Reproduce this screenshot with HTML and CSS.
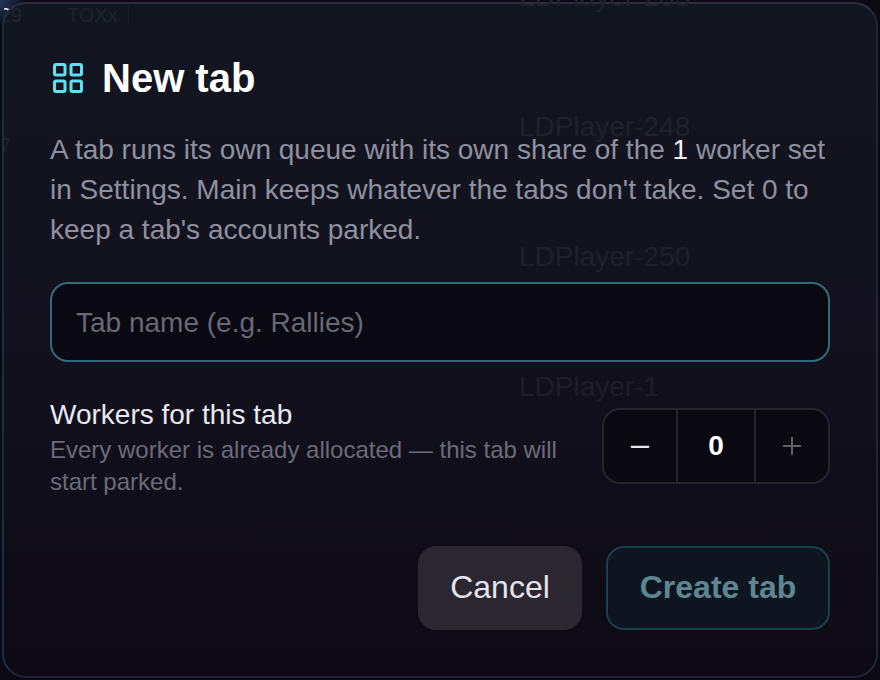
FILE: index.html
```html
<!DOCTYPE html>
<html lang="en">
<head>
<meta charset="utf-8">
<title>New tab</title>
<link rel="stylesheet" href="styles.css">
</head>
<body>
<div class="backdrop">
  <span class="ghost g2">LDPlayer-248</span>
  <span class="ghost g3">LDPlayer-250</span>
  <span class="ghost g4">LDPlayer-1</span>
  <span class="ghost small g5">29</span>
  <span class="ghost small g6">TOXx</span>
  <span class="ghost-rule"></span>
  <span class="ghost small g7">7</span>
</div>
<main class="modal">
  <header class="head">
    <svg class="head-icon" viewBox="0 0 24 24" fill="none" stroke="currentColor" stroke-width="2" stroke-linecap="round" stroke-linejoin="round" aria-hidden="true">
      <rect x="3" y="3" width="7" height="7" rx="1"/>
      <rect x="14" y="3" width="7" height="7" rx="1"/>
      <rect x="14" y="14" width="7" height="7" rx="1"/>
      <rect x="3" y="14" width="7" height="7" rx="1"/>
    </svg>
    <h1 class="title">New tab</h1>
  </header>
  <p class="intro">A tab runs its own queue with its own share of the <b class="strong">1</b> worker set in Settings. Main keeps whatever the tabs don't take. Set 0 to keep a tab's accounts parked.</p>
  <input class="name" type="text" placeholder="Tab name (e.g. Rallies)">
  <section class="workers">
    <div class="workers-text">
      <div class="workers-label">Workers for this tab</div>
      <div class="workers-hint">Every worker is already allocated — this tab will start parked.</div>
    </div>
    <div class="stepper">
      <button class="step step-on" type="button" aria-label="Decrease">
        <svg viewBox="0 0 24 24" class="step-icon" fill="none" stroke="currentColor" stroke-width="2.6" stroke-linecap="round"><path d="M2 13h20"/></svg>
      </button>
      <div class="count">0</div>
      <button class="step step-off" type="button" aria-label="Increase">
        <svg viewBox="0 0 24 24" class="step-icon" fill="none" stroke="currentColor" stroke-width="2.4" stroke-linecap="round"><path d="M2 12h20M12 2v20"/></svg>
      </button>
    </div>
  </section>
  <footer class="actions">
    <button class="btn cancel" type="button">Cancel</button>
    <button class="btn create" type="button">Create tab</button>
  </footer>
</main>
<span class="top-ghost">LDPlayer-283</span>
</body>
</html>
```

FILE: styles.css
```css
* { box-sizing: border-box; }
html, body { margin: 0; height: 100%; }
body {
  width: 880px;
  height: 680px;
  overflow: hidden;
  position: relative;
  background: radial-gradient(circle at 0 0, #24395c, rgba(36, 57, 92, 0) 26px), #0b0a12;
  padding: 2px;
  font-family: "Liberation Sans", Arial, sans-serif;
}
.backdrop { position: absolute; inset: 4px; overflow: hidden; pointer-events: none; }
.ghost { position: absolute; font-size: 28px; line-height: 32px; color: #b4b8c6; white-space: nowrap; }
.small { font-size: 20px; line-height: 24px; }
.top-ghost { position: absolute; left: 519px; top: -19px; font-size: 28px; line-height: 32px; color: #20232e; white-space: nowrap; pointer-events: none; }
.g2 { left: 515px; top: 107px; }
.g3 { left: 515px; top: 237px; }
.g4 { left: 515px; top: 367px; }
.g5 { left: -4px; top: -1px; color: #d8dcea; }
.g6 { left: 63px; top: -1px; }
.g7 { left: -4px; top: 129px; }
.ghost-rule { position: absolute; left: 124px; top: 1px; width: 1px; height: 20px; background: #b4b8c6; opacity: .6; }
.modal {
  position: relative;
  width: 876px;
  height: 676px;
  padding: 54px 46px 46px;
  border: 2px solid #232436;
  border-top-color: #2a2e40;
  border-left-color: #1e2c3e;
  border-radius: 24px;
  background: linear-gradient(180deg, rgba(18, 22, 33, .93) 0%, rgba(20, 18, 32, .93) 45%, rgba(13, 10, 21, .93) 100%);
}
.head { display: flex; align-items: center; gap: 16px; height: 40px; }
.head-icon { width: 36px; height: 36px; color: #5ee0f2; flex: none; }
.title { margin: 0; font-size: 40px; line-height: 40px; font-weight: 700; color: #fff; }
.intro { margin: 32px 0 0; font-size: 28px; line-height: 40px; color: #8f909f; }
.strong { font-weight: 400; color: #f2f2f7; }
.name {
  display: block;
  width: 780px;
  height: 80px;
  margin-top: 32px;
  padding: 2px 24px 0;
  border: 2px solid #2e6c78;
  border-radius: 18px;
  background: #0a0812;
  font: 28px "Liberation Sans", Arial, sans-serif;
  color: #fff;
  outline: none;
}
.name::placeholder { color: #686874; opacity: 1; }
.workers { display: flex; align-items: flex-start; justify-content: space-between; gap: 40px; margin-top: 37px; }
.workers-text { width: 520px; }
.workers-label { font-size: 28px; line-height: 32px; color: #e8e8f0; }
.workers-hint { margin-top: 3px; font-size: 24px; line-height: 32px; color: #6b6a78; }
.stepper {
  display: flex;
  width: 228px;
  height: 76px;
  margin-top: 9px;
  border: 2px solid #26242e;
  border-radius: 18px;
  background: #0a0811;
  overflow: hidden;
  flex: none;
}
.step { flex: none; width: 72px; padding: 0; border: 0; background: none; display: flex; align-items: center; justify-content: center; }
.step-icon { width: 20px; height: 20px; }
.step-on { color: #e6e6ec; }
.step-off { color: #5f5e69; }
.count {
  flex: 1;
  display: flex;
  align-items: center;
  justify-content: center;
  border-left: 2px solid #26242e;
  border-right: 2px solid #26242e;
  font-size: 28px;
  font-weight: 700;
  color: #fff;
}
.actions { display: flex; justify-content: flex-end; gap: 24px; margin-top: 48px; }
.btn { height: 84px; border-radius: 18px; font: 32px "Liberation Sans", Arial, sans-serif; padding: 0 0 2px; }
.cancel { width: 164px; border: 0; background: #2a2730; color: #e4e4ea; }
.create { width: 224px; border: 2px solid #17414d; background: #0e1520; color: #5d8790; font-weight: 700; }
```
